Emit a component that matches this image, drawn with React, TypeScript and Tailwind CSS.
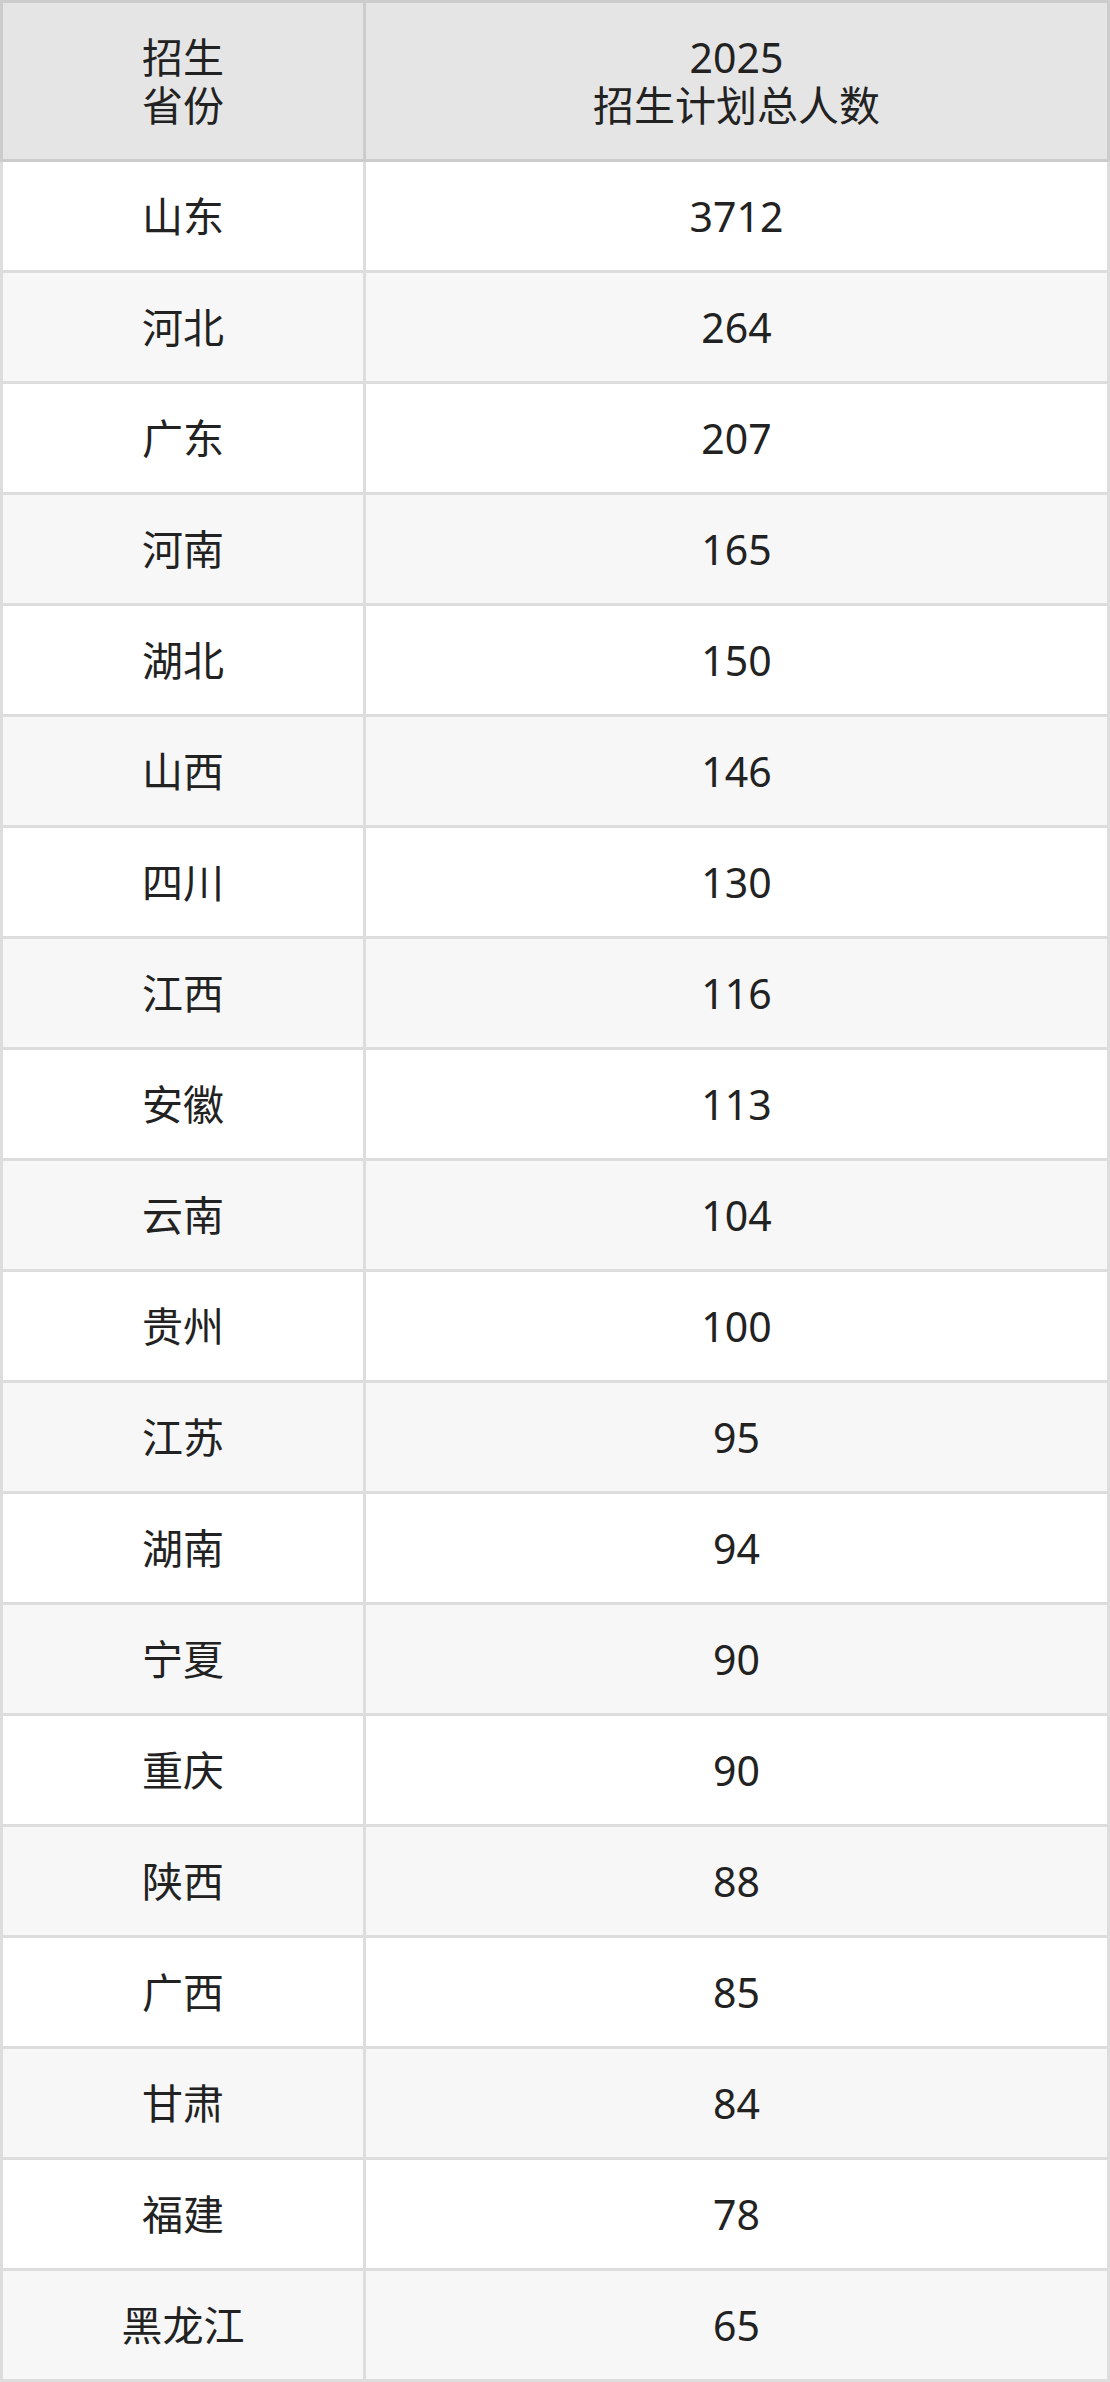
import React from "react";

const rows: [string, string][] = [
  ["山东", "3712"],
  ["河北", "264"],
  ["广东", "207"],
  ["河南", "165"],
  ["湖北", "150"],
  ["山西", "146"],
  ["四川", "130"],
  ["江西", "116"],
  ["安徽", "113"],
  ["云南", "104"],
  ["贵州", "100"],
  ["江苏", "95"],
  ["湖南", "94"],
  ["宁夏", "90"],
  ["重庆", "90"],
  ["陕西", "88"],
  ["广西", "85"],
  ["甘肃", "84"],
  ["福建", "78"],
  ["黑龙江", "65"],
];

export default function App() {
  return (
    <div
      className="w-[1110px] text-[41px] leading-[48px] text-[#222]"
      style={{ fontFamily: '"Noto Sans", "Noto Sans CJK SC", sans-serif' }}
    >
      <div className="flex border-[3px] border-[#cccccc] bg-[#e5e5e5]">
        <div className="w-[363px] py-[30px] text-center border-r-[3px] border-[#cccccc] shrink-0">
          <div>招生</div>
          <div>省份</div>
        </div>
        <div className="flex-1 py-[30px] text-center">
          <div>2025</div>
          <div>招生计划总人数</div>
        </div>
      </div>
      {rows.map(([p, n], i) => (
        <div
          key={i}
          className={
            "flex border-x-[3px] border-b-[3px] border-[#dddddd] " +
            (i % 2 === 0 ? "bg-white" : "bg-[#f7f7f7]")
          }
        >
          <div className="w-[363px] py-[30px] text-center border-r-[3px] border-[#dddddd] shrink-0">
            {p}
          </div>
          <div className="flex-1 py-[30px] text-center">{n}</div>
        </div>
      ))}
    </div>
  );
}
